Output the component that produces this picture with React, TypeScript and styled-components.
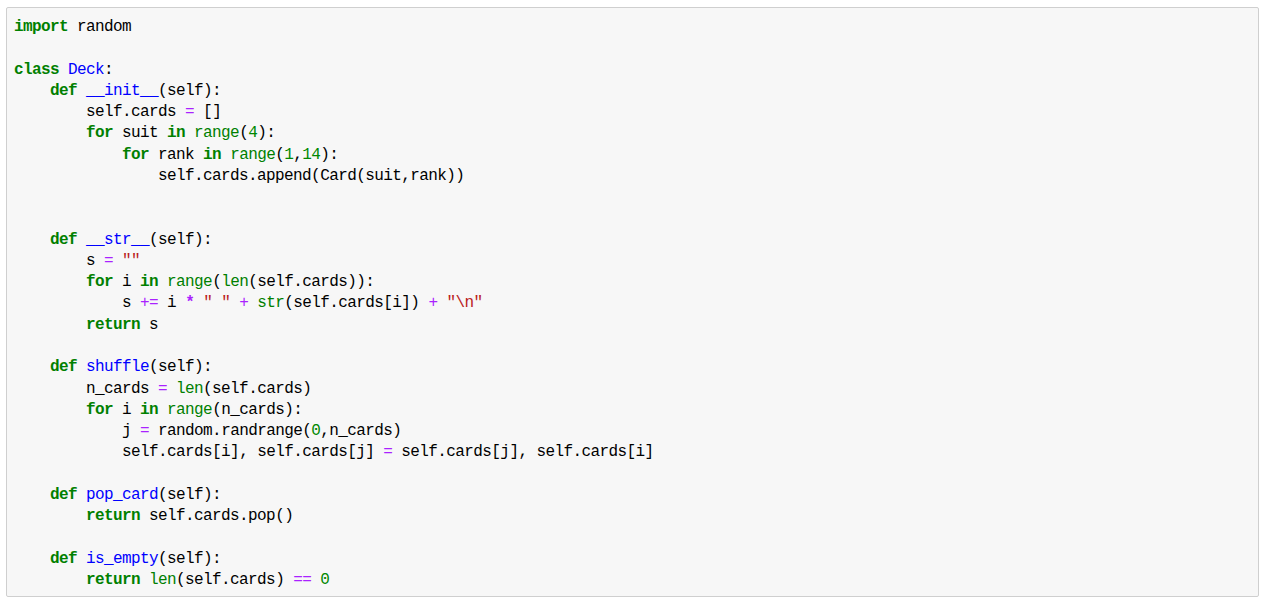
import React from "react";
import styled, { createGlobalStyle } from "styled-components";

const Global = createGlobalStyle`
  html, body { margin: 0; padding: 0; background: #ffffff; }
`;

const Page = styled.div`
  padding: 7px 13px 0 6px;
`;

const Cell = styled.div`
  box-sizing: border-box;
  width: 1253px;
  height: 590px;
  background: #f7f7f7;
  border: 1px solid #cfcfcf;
  border-radius: 2px;
  padding: 9px 7px 0 7px;
`;

const Code = styled.pre`
  margin: 0;
  font-family: "Liberation Mono", "DejaVu Sans Mono", monospace;
  font-size: 16px;
  letter-spacing: -0.6px;
  line-height: 21.27px;
  color: #000000;
  white-space: pre;
`;

const Line = styled.div`
  height: 21.27px;
`;

type Kind = "kw" | "def" | "builtin" | "num" | "str" | "op" | "opb" | "plain";

const colors: Record<Kind, string> = {
  kw: "#008000",
  def: "#0000ff",
  builtin: "#008000",
  num: "#008800",
  str: "#ba2121",
  op: "#aa22ff",
  opb: "#aa22ff",
  plain: "#000000",
};

const Tok = styled.span<{ $kind: Kind }>`
  color: ${(p) => colors[p.$kind]};
  font-weight: ${(p) => (p.$kind === "kw" || p.$kind === "opb" ? 700 : 400)};
`;

const source = `import random

class Deck:
    def __init__(self):
        self.cards = []
        for suit in range(4):
            for rank in range(1,14):
                self.cards.append(Card(suit,rank))


    def __str__(self):
        s = ""
        for i in range(len(self.cards)):
            s += i * " " + str(self.cards[i]) + "\\n"
        return s

    def shuffle(self):
        n_cards = len(self.cards)
        for i in range(n_cards):
            j = random.randrange(0,n_cards)
            self.cards[i], self.cards[j] = self.cards[j], self.cards[i]

    def pop_card(self):
        return self.cards.pop()

    def is_empty(self):
        return len(self.cards) == 0`;

const KEYWORDS = new Set(["import", "class", "def", "for", "in", "return"]);
const BUILTINS = new Set(["range", "len", "str"]);

function tokenize(line: string): [Kind, string][] {
  const out: [Kind, string][] = [];
  const re = /("[^"]*")|([A-Za-z_][A-Za-z0-9_]*)|(\d+)|(\+=|==|\*|\+|=)|(\s+)|(.)/g;
  let m: RegExpExecArray | null;
  let prevWord = "";
  while ((m = re.exec(line))) {
    if (m[1]) out.push(["str", m[1]]);
    else if (m[2]) {
      const w = m[2];
      if (KEYWORDS.has(w)) out.push(["kw", w]);
      else if (prevWord === "def" || prevWord === "class") out.push(["def", w]);
      else if (BUILTINS.has(w)) out.push(["builtin", w]);
      else out.push(["plain", w]);
      prevWord = w;
      continue;
    } else if (m[3]) out.push(["num", m[3]]);
    else if (m[4]) out.push([m[4] === "*" ? "opb" : "op", m[4]]);
    else if (m[5]) {
      out.push(["plain", m[5]]);
      continue;
    } else out.push(["plain", m[6]]);
    prevWord = "";
  }
  return out;
}

export default function App() {
  const lines = source.split("\n");
  return (
    <Page>
      <Global />
      <Cell>
        <Code>
          {lines.map((l, i) => (
            <Line key={i}>
              {l.length === 0
                ? "\u00a0"
                : tokenize(l).map(([k, t], j) => (
                    <Tok key={j} $kind={k}>
                      {t}
                    </Tok>
                  ))}
            </Line>
          ))}
        </Code>
      </Cell>
    </Page>
  );
}
